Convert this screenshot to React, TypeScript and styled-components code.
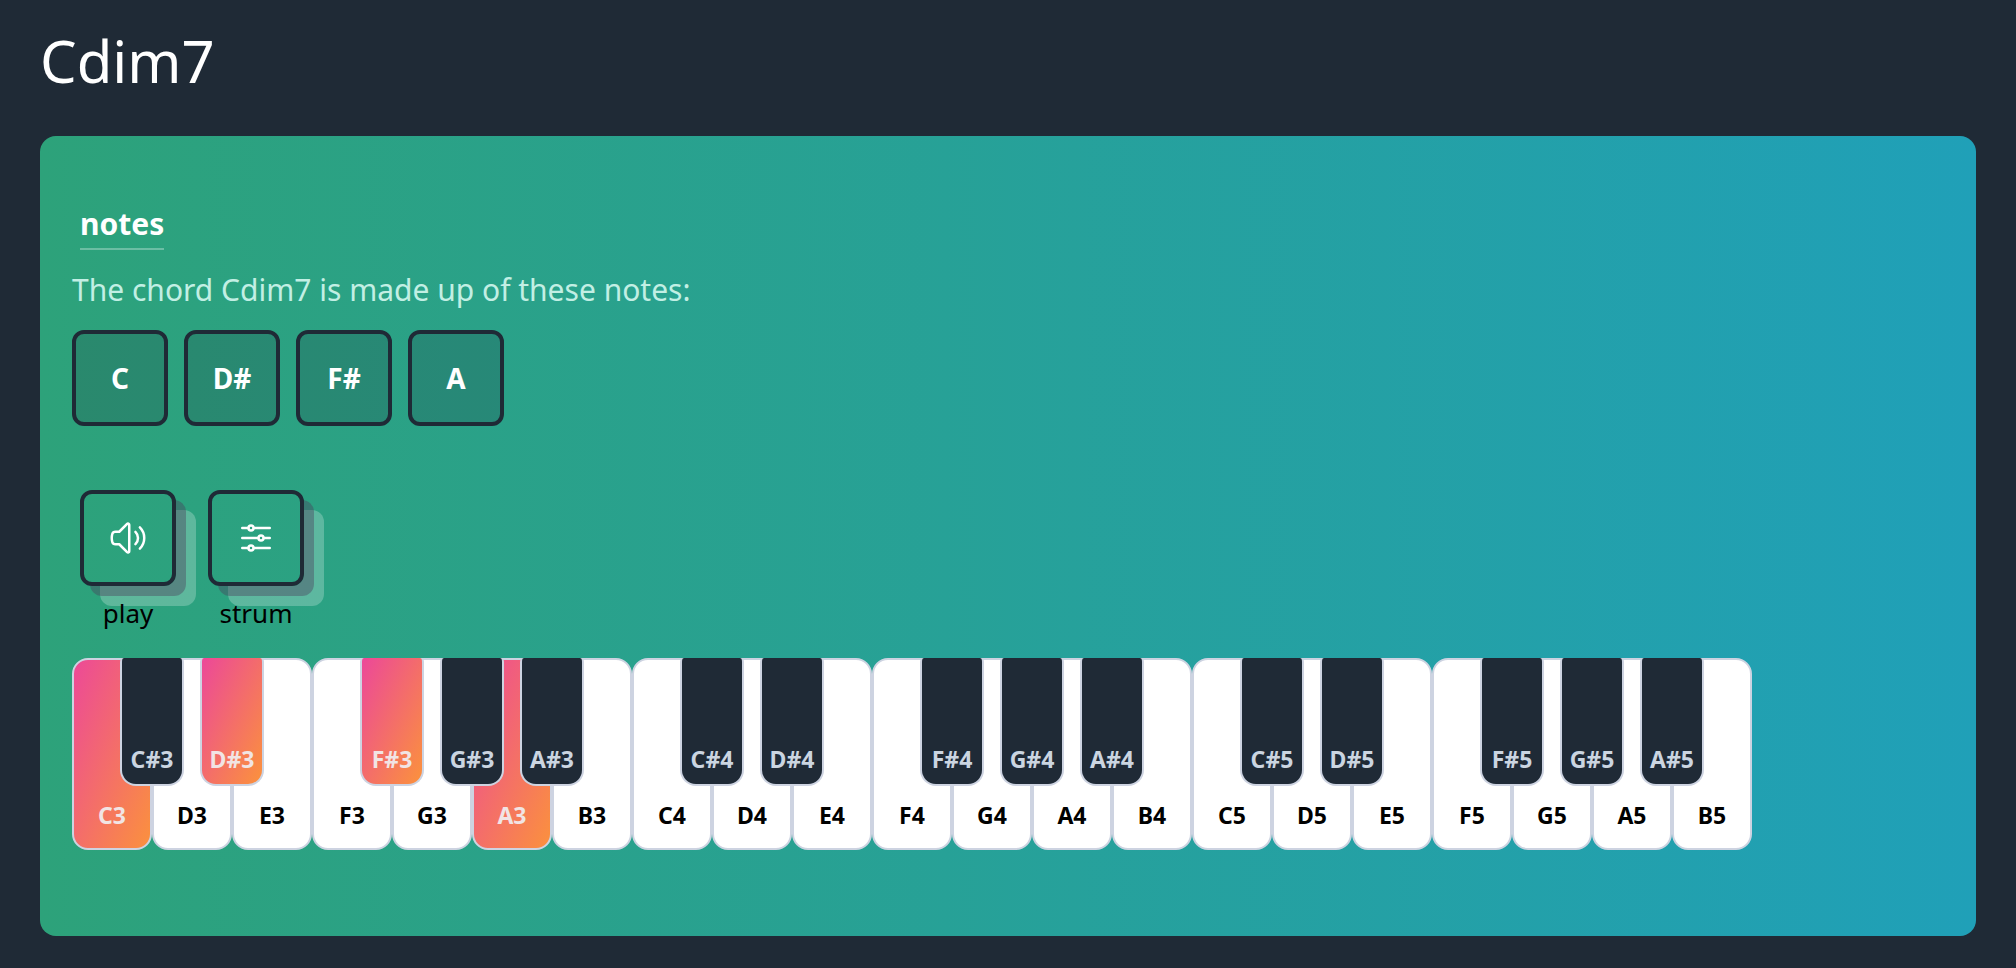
import React from "react";
import styled, { createGlobalStyle, css } from "styled-components";

const GlobalStyle = createGlobalStyle`
  *, *::before, *::after { box-sizing: border-box; }
  body {
    margin: 0;
    background: #1f2a36;
    font-family: "Noto Sans", sans-serif;
    color: #000;
  }
`;

const Page = styled.main`
  padding: 24px 40px 32px;
`;

const Title = styled.h1`
  margin: 0 0 38px;
  font-size: 58px;
  line-height: 74px;
  font-weight: 400;
  color: #fff;
`;

const Panel = styled.section`
  display: flex;
  flex-direction: column;
  align-items: flex-start;
  padding: 64px 32px 86px;
  border-radius: 16px;
  background: linear-gradient(to right, #2da27a, #20a0b8);
`;

const Heading = styled.h2`
  margin: 0 8px 16px;
  font-size: 30px;
  line-height: 48px;
  font-weight: 700;
  color: #fff;
  border-bottom: 2px solid rgba(255, 255, 255, 0.3);
`;

const Intro = styled.p`
  margin: 0 0 16px;
  font-size: 30px;
  line-height: 48px;
  color: #c2efe4;
`;

const NoteList = styled.ul`
  display: flex;
  gap: 16px;
  margin: 0 0 64px;
  padding: 0;
  list-style: none;
`;

const tile = css`
  display: flex;
  align-items: center;
  justify-content: center;
  width: 96px;
  height: 96px;
  border: 4px solid #1f2a36;
  border-radius: 12px;
  color: #fff;
`;

const Note = styled.li`
  ${tile}
  background: rgba(31, 41, 55, 0.2);
  font-size: 28px;
  line-height: 40px;
  font-weight: 700;
`;

const Actions = styled.div`
  display: flex;
  gap: 32px;
  margin: 0 8px 26px;
`;

const Action = styled.div`
  display: flex;
  flex-direction: column;
  align-items: center;
  gap: 8px;
`;

const ActionButton = styled.button`
  ${tile}
  padding: 0;
  background: transparent;
  box-shadow: 10px 10px rgba(75, 60, 90, 0.4), 20px 20px rgba(255, 255, 255, 0.24);
  cursor: pointer;
`;

const ActionLabel = styled.label`
  position: relative;
  font-size: 26px;
  line-height: 38px;
`;

const Icon = styled.svg`
  width: 40px;
  height: 40px;
  fill: none;
  stroke: currentColor;
  stroke-width: 1.5;
  stroke-linecap: round;
  stroke-linejoin: round;
`;

const Keyboard = styled.div`
  display: flex;
  align-items: flex-start;
`;

const Key = styled.button<{ $active: boolean }>`
  display: flex;
  flex: none;
  align-items: flex-end;
  justify-content: center;
  border: 2px solid #cdd3e1;
  font-family: inherit;
  font-size: 23px;
  line-height: 34px;
  font-weight: 700;
  cursor: pointer;
`;

const activeFill = "linear-gradient(to bottom right, #ec4899, #fb923c)";

const WhiteKey = styled(Key)`
  width: 80px;
  height: 192px;
  padding: 0 0 16px;
  border-radius: 16px;
  background: ${(p) => (p.$active ? activeFill : "#fff")} border-box;
  color: ${(p) => (p.$active ? "#f1e4e4" : "#000")};
`;

const BlackKey = styled(Key)`
  position: relative;
  z-index: 1;
  width: 64px;
  height: 128px;
  margin: 0 -32px;
  padding: 0 0 8px;
  border-top: 0;
  border-radius: 4px 4px 16px 16px;
  background: ${(p) => (p.$active ? activeFill : "#1f2a36")};
  color: ${(p) => (p.$active ? "#f1e4e4" : "#cbd5e1")};
`;

const chordNotes = ["C", "D#", "F#", "A"];
const scale = ["C", "C#", "D", "D#", "E", "F", "F#", "G", "G#", "A", "A#", "B"];
const keys = [3, 4, 5].flatMap((octave) => scale.map((note) => note + octave));
const activeKeys = new Set(["C3", "D#3", "F#3", "A3"]);

const SpeakerIcon = () => (
  <Icon viewBox="0 0 24 24" aria-hidden="true">
    <path d="M19.114 5.636a9 9 0 0 1 0 12.728M16.463 8.288a5.25 5.25 0 0 1 0 7.424M6.75 8.25l4.72-4.72a.75.75 0 0 1 1.28.53v15.88a.75.75 0 0 1-1.28.53l-4.72-4.72H4.51c-.88 0-1.704-.507-1.938-1.354A9.009 9.009 0 0 1 2.25 12c0-.83.112-1.633.322-2.396C2.806 8.756 3.63 8.25 4.51 8.25H6.75Z" />
  </Icon>
);

const SlidersIcon = () => (
  <Icon viewBox="0 0 24 24" aria-hidden="true">
    <path d="M10.5 6h9.75M10.5 6a1.5 1.5 0 1 1-3 0m3 0a1.5 1.5 0 1 0-3 0M3.75 6H7.5m3 12h9.75m-9.75 0a1.5 1.5 0 0 1-3 0m3 0a1.5 1.5 0 0 0-3 0m-3.75 0H7.5m9-6h3.75m-3.75 0a1.5 1.5 0 0 1-3 0m3 0a1.5 1.5 0 0 0-3 0m-9.75 0h9.75" />
  </Icon>
);

export default function App() {
  return (
    <>
      <GlobalStyle />
      <Page>
        <Title>Cdim7</Title>
        <Panel>
          <Heading>notes</Heading>
          <Intro>The chord Cdim7 is made up of these notes:</Intro>
          <NoteList>
            {chordNotes.map((note) => (
              <Note key={note}>{note}</Note>
            ))}
          </NoteList>
          <Actions>
            <Action>
              <ActionButton id="play" type="button">
                <SpeakerIcon />
              </ActionButton>
              <ActionLabel htmlFor="play">play</ActionLabel>
            </Action>
            <Action>
              <ActionButton id="strum" type="button">
                <SlidersIcon />
              </ActionButton>
              <ActionLabel htmlFor="strum">strum</ActionLabel>
            </Action>
          </Actions>
          <Keyboard>
            {keys.map((name) => {
              const KeyShape = name.includes("#") ? BlackKey : WhiteKey;
              return (
                <KeyShape key={name} type="button" $active={activeKeys.has(name)}>
                  {name}
                </KeyShape>
              );
            })}
          </Keyboard>
        </Panel>
      </Page>
    </>
  );
}
